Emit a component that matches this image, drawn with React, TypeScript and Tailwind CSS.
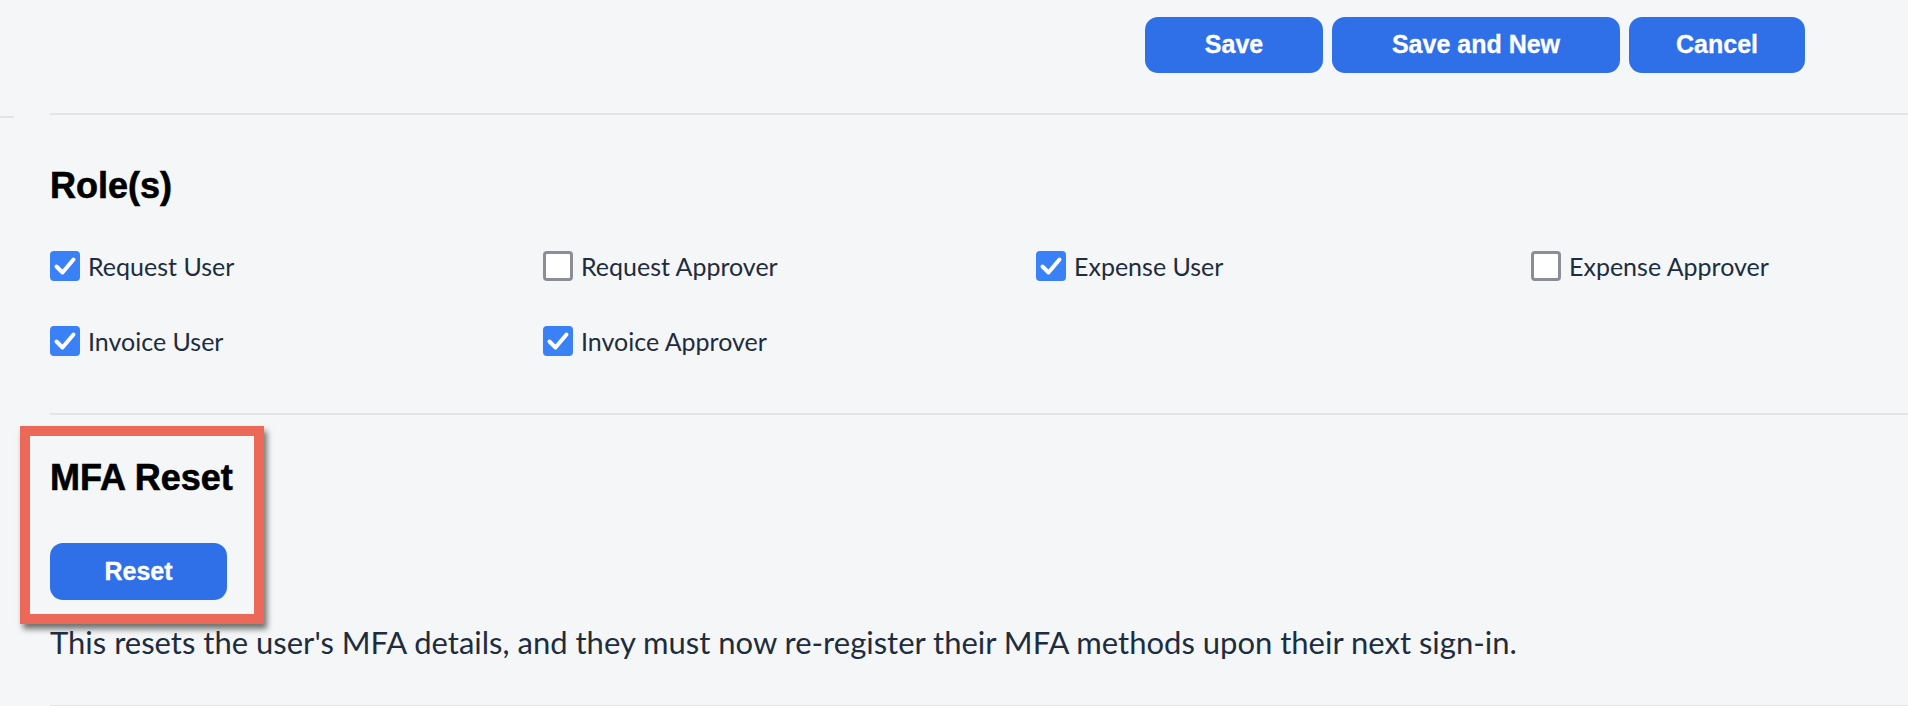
import { Fragment } from "react";

const roles = [
  { label: "Request User", checked: true },
  { label: "Request Approver", checked: false },
  { label: "Expense User", checked: true },
  { label: "Expense Approver", checked: false },
  { label: "Invoice User", checked: true },
  { label: "Invoice Approver", checked: true },
];

function Checkbox({ checked }: { checked: boolean }) {
  if (!checked) {
    return (
      <span className="block h-[30px] w-[30px] shrink-0 rounded-[4px] border-[3px] border-[#8d8d95] bg-white" />
    );
  }
  return (
    <span className="flex h-[30px] w-[30px] shrink-0 items-center justify-center rounded-[4px] bg-[#3a80f6]">
      <svg width="30" height="30" viewBox="0 0 30 30" fill="none">
        <path
          d="M6.5 15.5 L12.5 21.5 L23.5 8.5"
          stroke="white"
          strokeWidth="4"
          strokeLinecap="round"
          strokeLinejoin="round"
        />
      </svg>
    </span>
  );
}

function BlueButton({ label, width }: { label: string; width: string }) {
  return (
    <button
      className={`${width} h-[56px] rounded-[13px] bg-[#2f70e8] text-[25px] font-bold text-white font-['Liberation_Sans',Arial,sans-serif] [-webkit-text-stroke:0.3px_white]`}
    >
      {label}
    </button>
  );
}

export default function App() {
  return (
    <div className="h-[706px] w-full overflow-hidden bg-[#f5f6f7] font-['Lato',sans-serif] text-[#1d2d3e]">
      {/* action bar */}
      <div className="flex h-[113px] justify-end pr-[103px] pt-[17px]">
        <div className="flex gap-[9px]">
          <BlueButton label="Save" width="w-[178px]" />
          <BlueButton label="Save and New" width="w-[288px]" />
          <BlueButton label="Cancel" width="w-[176px]" />
        </div>
      </div>

      <div className="flex">
        <div className="mt-[3px] h-[2px] w-[14px] bg-[#e3e4e6]" />
        <div className="ml-[36px] h-[2px] flex-1 bg-[#e3e4e6]" />
      </div>

      {/* roles */}
      <section className="pl-[50px]">
        <h2 className="mt-[50px] text-[36px] font-bold leading-[36px] text-black font-['Liberation_Sans',Arial,sans-serif] [-webkit-text-stroke:0.6px_black]">
          Role(s)
        </h2>
        <div className="mt-[47px] grid grid-cols-[493px_493px_495px_auto] gap-y-[45px]">
          {roles.map((r) => (
            <Fragment key={r.label}>
              <label className="flex h-[30px] items-center gap-[8px] text-[25px] leading-[30px]">
                <Checkbox checked={r.checked} />
                <span>{r.label}</span>
              </label>
            </Fragment>
          ))}
        </div>
      </section>

      <div className="ml-[50px] mt-[57px] h-[2px] bg-[#e3e4e6]" />

      {/* mfa reset */}
      <div className="ml-[20px] mt-[11px] w-[244px] border-[10px] border-[#ec6858] pb-[14px] pl-[20px] pt-[24px] shadow-[3px_5px_6px_rgba(0,0,0,0.55)]">
        <h2 className="text-[36px] font-bold leading-[36px] text-black font-['Liberation_Sans',Arial,sans-serif] [-webkit-text-stroke:0.6px_black]">
          MFA Reset
        </h2>
        <button className="mt-[47px] h-[57px] w-[177px] rounded-[13px] bg-[#2f70e8] text-[25px] font-bold text-white font-['Liberation_Sans',Arial,sans-serif] [-webkit-text-stroke:0.3px_white]">
          Reset
        </button>
      </div>
      <p className="ml-[50px] text-[31px] leading-[1.2]">
        This resets the user's MFA details, and they must now re-register their MFA methods upon their next sign-in.
      </p>

      <div className="ml-[50px] mt-[44px] h-[2px] bg-[#e3e4e6]" />
    </div>
  );
}
